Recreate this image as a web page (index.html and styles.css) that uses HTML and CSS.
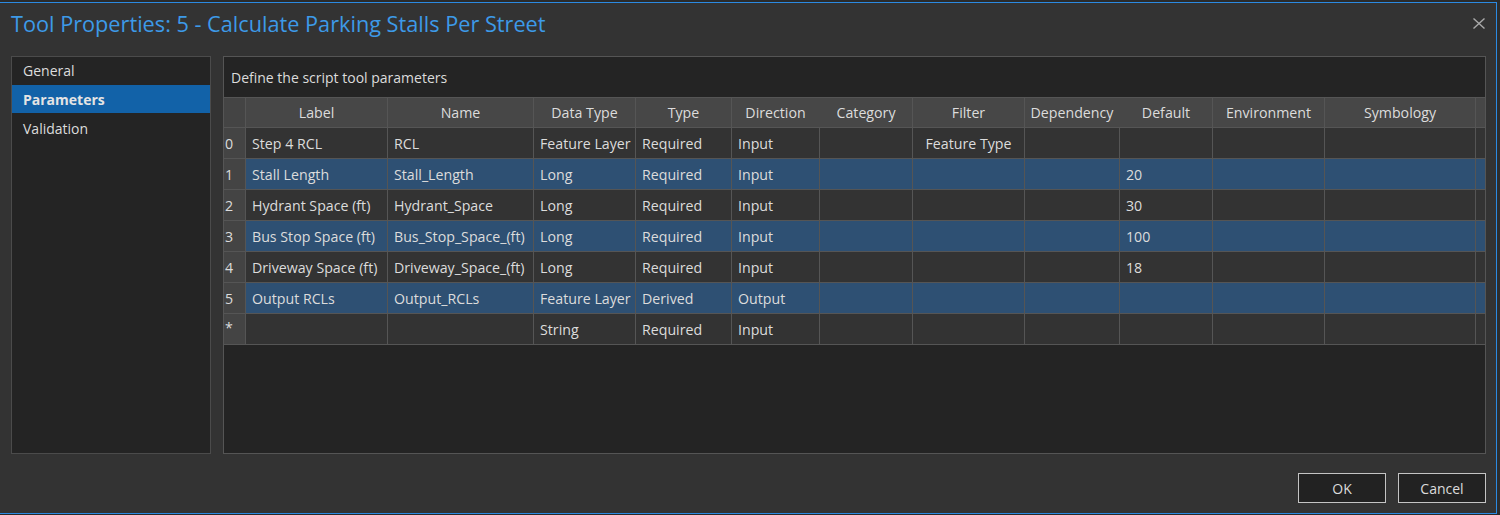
FILE: index.html
```html
<!DOCTYPE html>
<html>
<head>
<meta charset="utf-8">
<title>Tool Properties</title>
<link rel="stylesheet" href="styles.css">
</head>
<body>
<div class="appbar"></div>
<div class="frame">
  <div class="dialog">
    <div class="titlebar">
      <h1 class="title">Tool Properties: 5 - Calculate Parking Stalls Per Street</h1>
      <svg class="close" width="12" height="11" viewBox="0 0 12 11"><path d="M0.5 0.5 L11.5 10.5 M11.5 0.5 L0.5 10.5" stroke="#a9a9a9" stroke-width="1.4" fill="none"/></svg>
    </div>
    <div class="content">
      <nav class="nav">
        <div class="nav-item">General</div>
        <div class="nav-item selected">Parameters</div>
        <div class="nav-item last">Validation</div>
      </nav>
      <section class="panel">
        <div class="desc">Define the script tool parameters</div>
        <div class="grid">
          <div class="row head">
            <div class="cell c-num"></div>
            <div class="cell c-label">Label</div>
            <div class="cell c-name">Name</div>
            <div class="cell c-dtype">Data Type</div>
            <div class="cell c-type">Type</div>
            <div class="cell c-dir noline">Direction</div>
            <div class="cell c-cat">Category</div>
            <div class="cell c-filter">Filter</div>
            <div class="cell c-dep noline">Dependency</div>
            <div class="cell c-def">Default</div>
            <div class="cell c-env">Environment</div>
            <div class="cell c-sym">Symbology</div>
            <div class="cell c-fill"></div>
          </div>
          <div class="row">
            <div class="cell c-num">0</div>
            <div class="cell c-label">Step 4 RCL</div>
            <div class="cell c-name">RCL</div>
            <div class="cell c-dtype">Feature Layer</div>
            <div class="cell c-type">Required</div>
            <div class="cell c-dir">Input</div>
            <div class="cell c-cat"></div>
            <div class="cell c-filter center">Feature Type</div>
            <div class="cell c-dep"></div>
            <div class="cell c-def"></div>
            <div class="cell c-env"></div>
            <div class="cell c-sym"></div>
            <div class="cell c-fill"></div>
          </div>
          <div class="row sel">
            <div class="cell c-num">1</div>
            <div class="cell c-label">Stall Length</div>
            <div class="cell c-name">Stall_Length</div>
            <div class="cell c-dtype">Long</div>
            <div class="cell c-type">Required</div>
            <div class="cell c-dir">Input</div>
            <div class="cell c-cat"></div>
            <div class="cell c-filter"></div>
            <div class="cell c-dep"></div>
            <div class="cell c-def">20</div>
            <div class="cell c-env"></div>
            <div class="cell c-sym"></div>
            <div class="cell c-fill"></div>
          </div>
          <div class="row">
            <div class="cell c-num">2</div>
            <div class="cell c-label">Hydrant Space (ft)</div>
            <div class="cell c-name">Hydrant_Space</div>
            <div class="cell c-dtype">Long</div>
            <div class="cell c-type">Required</div>
            <div class="cell c-dir">Input</div>
            <div class="cell c-cat"></div>
            <div class="cell c-filter"></div>
            <div class="cell c-dep"></div>
            <div class="cell c-def">30</div>
            <div class="cell c-env"></div>
            <div class="cell c-sym"></div>
            <div class="cell c-fill"></div>
          </div>
          <div class="row sel">
            <div class="cell c-num">3</div>
            <div class="cell c-label">Bus Stop Space (ft)</div>
            <div class="cell c-name">Bus_Stop_Space_(ft)</div>
            <div class="cell c-dtype">Long</div>
            <div class="cell c-type">Required</div>
            <div class="cell c-dir">Input</div>
            <div class="cell c-cat"></div>
            <div class="cell c-filter"></div>
            <div class="cell c-dep"></div>
            <div class="cell c-def">100</div>
            <div class="cell c-env"></div>
            <div class="cell c-sym"></div>
            <div class="cell c-fill"></div>
          </div>
          <div class="row">
            <div class="cell c-num">4</div>
            <div class="cell c-label">Driveway Space (ft)</div>
            <div class="cell c-name">Driveway_Space_(ft)</div>
            <div class="cell c-dtype">Long</div>
            <div class="cell c-type">Required</div>
            <div class="cell c-dir">Input</div>
            <div class="cell c-cat"></div>
            <div class="cell c-filter"></div>
            <div class="cell c-dep"></div>
            <div class="cell c-def">18</div>
            <div class="cell c-env"></div>
            <div class="cell c-sym"></div>
            <div class="cell c-fill"></div>
          </div>
          <div class="row sel">
            <div class="cell c-num">5</div>
            <div class="cell c-label">Output RCLs</div>
            <div class="cell c-name">Output_RCLs</div>
            <div class="cell c-dtype">Feature Layer</div>
            <div class="cell c-type">Derived</div>
            <div class="cell c-dir">Output</div>
            <div class="cell c-cat"></div>
            <div class="cell c-filter"></div>
            <div class="cell c-dep"></div>
            <div class="cell c-def"></div>
            <div class="cell c-env"></div>
            <div class="cell c-sym"></div>
            <div class="cell c-fill"></div>
          </div>
          <div class="row">
            <div class="cell c-num star">*</div>
            <div class="cell c-label"></div>
            <div class="cell c-name"></div>
            <div class="cell c-dtype">String</div>
            <div class="cell c-type">Required</div>
            <div class="cell c-dir">Input</div>
            <div class="cell c-cat"></div>
            <div class="cell c-filter"></div>
            <div class="cell c-dep"></div>
            <div class="cell c-def"></div>
            <div class="cell c-env"></div>
            <div class="cell c-sym"></div>
            <div class="cell c-fill"></div>
          </div>
        </div>
      </section>
    </div>
    <div class="footer">
      <button class="btn">OK</button>
      <button class="btn">Cancel</button>
    </div>
  </div>
  <div class="appside"></div>
</div>
</body>
</html>
```
FILE: styles.css
```css
* { box-sizing: border-box; }
html, body { margin: 0; padding: 0; }
body {
  width: 1500px;
  height: 515px;
  overflow: hidden;
  background: #2a2a2a;
  font-family: "Open Sans", "Noto Sans", sans-serif;
  color: #dcdcdc;
}
.appbar { height: 2px; background: #2b2b2b; }
.frame { display: flex; }
.dialog {
  width: 1497px;
  height: 512px;
  background: #333333;
  border: 1px solid #2b8ae2;
  border-left: none;
  display: flex;
  flex-direction: column;
}
.appside { flex: 1; background: #2d2d2d; }
.titlebar {
  height: 53px;
  display: flex;
  align-items: flex-start;
  justify-content: space-between;
  padding: 0 11px 0 11px;
}
.title {
  margin: 6px 0 0 0;
  font-weight: normal;
  font-size: 21.7px;
  line-height: 30px;
  color: #3d9ae8;
}
.close { margin-top: 15px; margin-right: 0; }
.content {
  height: 398px;
  display: flex;
  gap: 12px;
  padding: 0 10px 0 11px;
}
.nav {
  width: 200px;
  height: 398px;
  background: #242424;
  border: 1px solid #4b4b4b;
}
.nav-item {
  height: 28px;
  line-height: 28px;
  padding-left: 11px;
  font-size: 14px;
}
.nav-item + .nav-item { padding-top: 1px; }
.nav-item.last { margin-top: 1px; }
.nav-item.selected {
  background: #1262a8;
  font-weight: bold;
  color: #e4e4e4;
}
.panel {
  width: 1263px;
  height: 398px;
  background: #242424;
  border: 1px solid #555555;
  display: flex;
  flex-direction: column;
}
.desc {
  height: 40px;
  line-height: 40px;
  padding: 1px 0 0 7px;
  font-size: 14px;
}
.grid { border-top: 1px solid #555555; }
.row {
  display: flex;
  height: 31px;
  background: #333333;
  border-bottom: 1px solid #555555;
}
.row.head { height: 30px; background: #474747; }
.row.sel { background: #2e5073; }
.cell {
  border-right: 1px solid #555555;
  font-size: 14.2px;
  line-height: 29px;
  padding-top: 1px;
  padding-left: 6px;
  white-space: nowrap;
  overflow: hidden;
}
.head .cell { text-align: center; padding-left: 0; line-height: 28px; }
.head .cell.noline { border-right-color: #474747; }
.cell.center { text-align: center; padding-left: 0; }
.c-num { width: 22px; padding-left: 1px; background: #444444; }
.c-num.star { line-height: 26px; }
.c-label { width: 142px; }
.c-name { width: 146px; }
.c-dtype { width: 102px; }
.c-type { width: 96px; }
.c-dir { width: 88px; }
.c-cat { width: 93px; }
.c-filter { width: 112px; }
.c-dep { width: 95px; }
.c-def { width: 93px; }
.c-env { width: 112px; }
.c-sym { width: 151px; }
.c-fill { width: 9px; border-right: none; }
.footer {
  flex: 1;
  display: flex;
  justify-content: flex-end;
  gap: 12px;
  padding: 19px 10px 0 0;
}
.btn {
  width: 88px;
  height: 30px;
  background: #222222;
  border: 1px solid #c4c4c4;
  color: #dcdcdc;
  font-family: "Open Sans", "Noto Sans", sans-serif;
  font-size: 14px;
  padding: 0;
}
```
